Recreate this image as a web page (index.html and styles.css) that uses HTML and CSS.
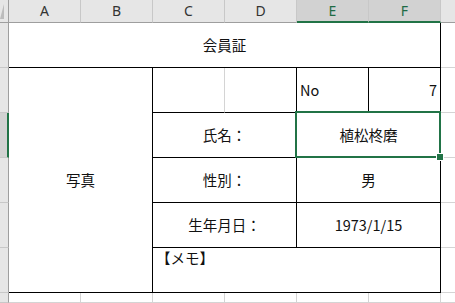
FILE: index.html
```html
<!DOCTYPE html>
<html lang="ja">
<head>
  <meta charset="UTF-8" />
  <title>会員証</title>
  <link rel="stylesheet" href="styles.css">
</head>
<body>
  <div class="sheet">
    <!-- 列見出し -->
    <div class="corner"><span class="select-all"></span></div>
    <div class="colhead">A</div>
    <div class="colhead">B</div>
    <div class="colhead">C</div>
    <div class="colhead">D</div>
    <div class="colhead on">E</div>
    <div class="colhead on">F</div>
    <div class="colhead last"></div>

    <!-- 1行目 -->
    <div class="rowhead"></div>
    <div class="cell black center title">会員証</div>
    <div class="cell rest"></div>

    <!-- 2行目 -->
    <div class="rowhead"></div>
    <div class="cell black center photo">写真</div>
    <div class="cell black-b"></div>
    <div class="cell black"></div>
    <div class="cell black left">No</div>
    <div class="cell black right">7</div>
    <div class="cell rest"></div>

    <!-- 3行目 -->
    <div class="rowhead on"></div>
    <div class="cell black center span2">氏名：</div>
    <div class="cell black center span2 selected">植松柊磨</div>
    <div class="cell rest"></div>

    <!-- 4行目 -->
    <div class="rowhead"></div>
    <div class="cell black center span2">性別：</div>
    <div class="cell black center span2">男</div>
    <div class="cell rest"></div>

    <!-- 5行目 -->
    <div class="rowhead"></div>
    <div class="cell black center span2">生年月日：</div>
    <div class="cell black center span2">1973/1/15</div>
    <div class="cell rest"></div>

    <!-- 6行目 -->
    <div class="rowhead"></div>
    <div class="cell black memo">【メモ】</div>
    <div class="cell rest"></div>

    <!-- 7行目 -->
    <div class="rowhead"></div>
    <div class="cell"></div>
    <div class="cell"></div>
    <div class="cell"></div>
    <div class="cell"></div>
    <div class="cell"></div>
    <div class="cell"></div>
    <div class="cell rest"></div>
  </div>
</body>
</html>
```

FILE: styles.css
```css
body {
  margin: 0;
  padding: 0;
  background: #fff;
  overflow: hidden;
}
.sheet {
  display: grid;
  grid-template-columns: 9px repeat(6, 72px) 14px;
  grid-template-rows: 23px repeat(6, 45px) 10px;
  width: 455px;
  height: 303px;
  font-family: "Noto Sans CJK JP", sans-serif;
  font-size: 14.5px;
  color: #111;
}
.sheet > div {
  box-sizing: border-box;
}

/* 見出し */
.corner {
  position: relative;
  background: #e6e6e6;
  border-right: 1px solid #9e9e9e;
  border-bottom: 1px solid #9e9e9e;
}
.select-all {
  position: absolute;
  left: 0;
  bottom: 3px;
  width: 0;
  height: 0;
  border-left: 4px solid transparent;
  border-bottom: 15px solid #bcbcbc;
}
.colhead {
  background: #e6e6e6;
  border-right: 1px solid #c8c8c8;
  border-bottom: 1px solid #9e9e9e;
  font-family: "Noto Sans", sans-serif;
  font-size: 14px;
  color: #333;
  text-align: center;
  line-height: 22px;
}
.colhead.on {
  background: #d2d2d2;
  color: #1e6b45;
  border-bottom: 2px solid #217346;
  line-height: 21px;
}
.colhead.last {
  border-right: none;
}
.rowhead {
  background: #e6e6e6;
  border-right: 1px solid #9e9e9e;
  border-bottom: 1px solid #c8c8c8;
}
.rowhead.on {
  background: #d2d2d2;
  border-right: 2px solid #217346;
}

/* セル */
.cell {
  border-right: 1px solid #d4d4d4;
  border-bottom: 1px solid #d4d4d4;
  white-space: nowrap;
}
.cell.black {
  border-right-color: #000;
  border-bottom-color: #000;
}
.cell.black-b {
  border-bottom-color: #000;
}
.cell.rest {
  border-right: none;
}
.center {
  display: flex;
  align-items: center;
  justify-content: center;
  padding-bottom: 2px;
}
.left {
  display: flex;
  align-items: center;
  padding: 0 0 2px 3px;
}
.right {
  display: flex;
  align-items: center;
  justify-content: flex-end;
  padding: 0 3px 2px 0;
}
.title {
  grid-column: span 6;
}
.photo {
  grid-column: span 2;
  grid-row: span 5;
}
.span2 {
  grid-column: span 2;
}
.memo {
  grid-column: span 4;
  padding: 0 0 0 3px;
  line-height: 20px;
}

/* 選択中のセル */
.selected {
  position: relative;
}
.selected::after {
  content: "";
  position: absolute;
  left: -2px;
  top: -2px;
  right: -1px;
  bottom: -1px;
  border: 2px solid #217346;
  z-index: 2;
}
.selected::before {
  content: "";
  position: absolute;
  right: -3px;
  bottom: -3px;
  width: 6px;
  height: 6px;
  background: #217346;
  outline: 1px solid #fff;
  z-index: 3;
}
```
